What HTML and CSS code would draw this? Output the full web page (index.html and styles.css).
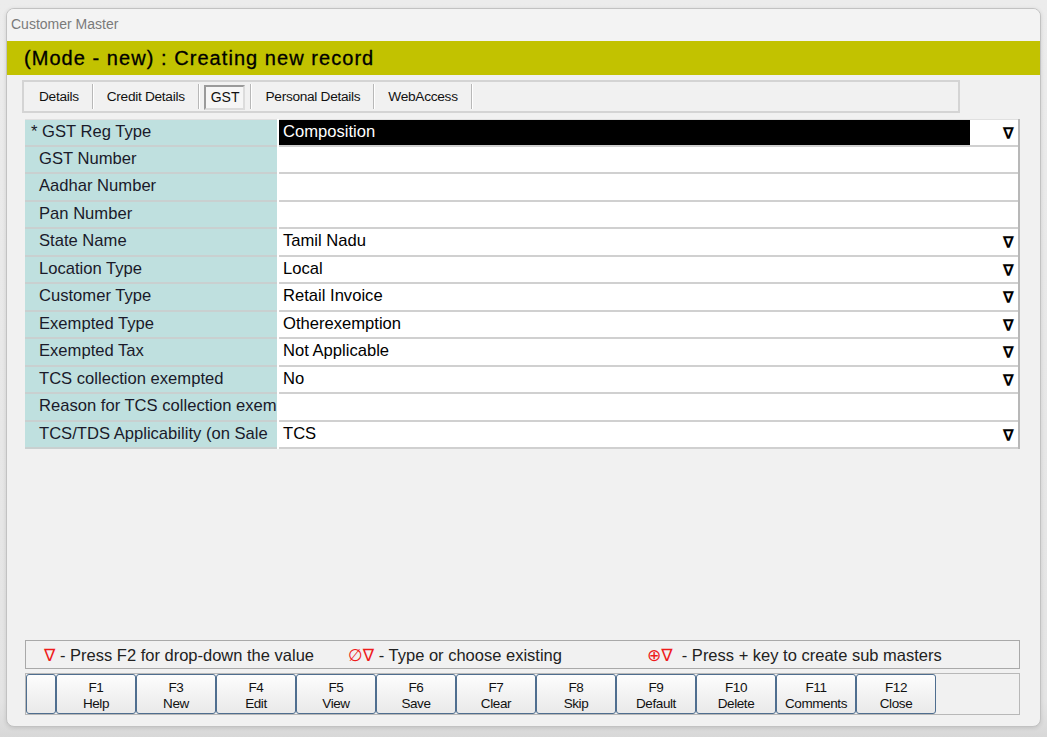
FILE: index.html
```html
<!DOCTYPE html>
<html>
<head>
<meta charset="utf-8">
<link rel="stylesheet" href="styles.css">
</head>
<body>
<div class="window">
  <div class="titlebar">Customer Master</div>
  <div class="modebar">(Mode - new) : Creating new record</div>
  <div class="tabs">
    <div class="tab first">Details</div>
    <div class="tab">Credit Details</div>
    <div class="tab active"><span class="tabbox">GST</span></div>
    <div class="tab">Personal Details</div>
    <div class="tab">WebAccess</div>
  </div>
  <div class="grid">
    <div class="row"><div class="label star">* GST Reg Type</div><div class="value"><span class="selected">Composition</span><span class="arrow">∇</span></div></div>
    <div class="row"><div class="label">GST Number</div><div class="value"></div></div>
    <div class="row"><div class="label">Aadhar Number</div><div class="value"></div></div>
    <div class="row"><div class="label">Pan Number</div><div class="value"></div></div>
    <div class="row"><div class="label">State Name</div><div class="value"><span class="text">Tamil Nadu</span><span class="arrow">∇</span></div></div>
    <div class="row"><div class="label">Location Type</div><div class="value"><span class="text">Local</span><span class="arrow">∇</span></div></div>
    <div class="row"><div class="label">Customer Type</div><div class="value"><span class="text">Retail Invoice</span><span class="arrow">∇</span></div></div>
    <div class="row"><div class="label">Exempted Type</div><div class="value"><span class="text">Otherexemption</span><span class="arrow">∇</span></div></div>
    <div class="row"><div class="label">Exempted Tax</div><div class="value"><span class="text">Not Applicable</span><span class="arrow">∇</span></div></div>
    <div class="row"><div class="label">TCS collection exempted</div><div class="value"><span class="text">No</span><span class="arrow">∇</span></div></div>
    <div class="row"><div class="label">Reason for TCS collection exem</div><div class="value"></div></div>
    <div class="row"><div class="label">TCS/TDS Applicability (on Sale</div><div class="value"><span class="text">TCS</span><span class="arrow">∇</span></div></div>
  </div>
  <div class="spacer"></div>
  <div class="helpbar">
    <span class="help h1"><span class="red">∇</span> - Press F2 for drop-down the value</span>
    <span class="help h2"><span class="red">∅∇</span> - Type or choose existing</span>
    <span class="help h3"><span class="red">⊕∇</span> &nbsp;- Press + key to create sub masters</span>
  </div>
  <div class="buttons">
    <div class="btn blank"></div>
    <div class="btn"><span>F1</span><span>Help</span></div>
    <div class="btn"><span>F3</span><span>New</span></div>
    <div class="btn"><span>F4</span><span>Edit</span></div>
    <div class="btn"><span>F5</span><span>View</span></div>
    <div class="btn"><span>F6</span><span>Save</span></div>
    <div class="btn"><span>F7</span><span>Clear</span></div>
    <div class="btn"><span>F8</span><span>Skip</span></div>
    <div class="btn"><span>F9</span><span>Default</span></div>
    <div class="btn"><span>F10</span><span>Delete</span></div>
    <div class="btn"><span>F11</span><span>Comments</span></div>
    <div class="btn"><span>F12</span><span>Close</span></div>
  </div>
</div>
</body>
</html>
```

FILE: styles.css
```css
html, body {
  margin: 0;
  padding: 0;
}
body {
  width: 1047px;
  height: 737px;
  background: linear-gradient(#ececec 0px, #e4e4e4 700px, #d8d8d8 737px);
  font-family: "Liberation Sans", Arial, sans-serif;
  overflow: hidden;
  padding-top: 8px;
  padding-left: 6px;
  box-sizing: border-box;
}
.window {
  width: 1035px;
  height: 719px;
  background: #f1f1f1;
  border: 1px solid #c2c2c2;
  border-radius: 8px;
  box-sizing: border-box;
  display: flex;
  flex-direction: column;
  overflow: hidden;
  box-shadow: 0 1px 4px rgba(0,0,0,0.12);
}
.titlebar {
  height: 32px;
  line-height: 31px;
  padding-left: 4px;
  font-size: 14px;
  color: #7a7a7a;
  background: #f3f3f3;
  flex: none;
}
.modebar {
  height: 34px;
  line-height: 35px;
  background: #c2c200;
  padding-left: 17px;
  font-size: 20px;
  color: #000;
  letter-spacing: 1.05px;
  -webkit-text-stroke: 0.3px #000;
  flex: none;
}
.tabs {
  margin: 5px 0 0 15px;
  width: 938px;
  height: 33px;
  border: 2px solid #d4d4d4;
  box-sizing: border-box;
  display: flex;
  align-items: center;
  font-size: 13.7px;
  color: #111;
  letter-spacing: -0.3px;
  flex: none;
}
.tab {
  height: 25px;
  line-height: 25px;
  padding: 0 13px 0 14px;
  border-right: 1px solid #b8b8b8;
  box-shadow: 1px 0 0 #ffffff;
}
.tab.first {
  padding-left: 15px;
}
.tab.active {
  padding: 0 5px 0 5px;
}
.tabbox {
  display: block;
  height: 21px;
  line-height: 21px;
  margin-top: 1px;
  padding: 0 4px 0 5px;
  border: 2px solid #9a9a9a;
  border-right-color: #dcdcdc;
  border-bottom-color: #dcdcdc;
  background: #f6f6f6;
  font-size: 14px;
  letter-spacing: 0;
}
.grid {
  margin: 6px 0 0 18px;
  width: 995px;
  border-right: 2px solid #b8b8b8;
  box-sizing: border-box;
  flex: none;
}
.row {
  display: flex;
  height: 27.5px;
  background: #fff;
}
.label {
  width: 252px;
  flex: none;
  background: #bfe0df;
  border-bottom: 2px solid #c9d0d0;
  box-sizing: border-box;
  padding-left: 14px;
  font-size: 16.6px;
  line-height: 24px;
  color: #1a1a2a;
  white-space: nowrap;
  overflow: hidden;
}
.label.star {
  padding-left: 6px;
}
.value {
  flex: 1;
  margin-left: 2px;
  border-bottom: 2px solid #d0d0d0;
  box-sizing: border-box;
  display: flex;
  align-items: stretch;
  font-size: 16.6px;
  line-height: 24px;
  color: #000;
}
.row:first-child .label,
.row:first-child .value {
  border-top: 1px solid #e0e0e0;
}
.text {
  flex: 1;
  padding-left: 4px;
}
.selected {
  width: 691px;
  flex: none;
  background: #000;
  color: #fff;
  padding-left: 4px;
  box-sizing: border-box;
}
.arrow {
  width: 24px;
  flex: none;
  text-align: right;
  padding-right: 4px;
  box-sizing: border-box;
  font-family: "DejaVu Sans", sans-serif;
  font-weight: bold;
  font-size: 16px;
  line-height: 28px;
  color: #000;
  margin-left: auto;
}
.spacer {
  flex: 1;
}
.helpbar {
  margin: 0 0 0 18px;
  width: 995px;
  height: 29px;
  border: 1px solid #a9a9a9;
  box-sizing: border-box;
  background: #f1f1f1;
  display: flex;
  align-items: center;
  font-size: 16.5px;
  color: #222;
  padding-left: 18px;
  flex: none;
}
.help {
  white-space: nowrap;
}
.h1 { width: 304px; }
.h2 { width: 299px; }
.red {
  color: #ee1c1c;
  font-family: "DejaVu Sans", sans-serif;
  font-size: 17px;
}
.buttons {
  margin: 4px 0 11px 18px;
  width: 995px;
  height: 42px;
  border: 1px solid #b8b8b8;
  box-sizing: border-box;
  display: flex;
  align-items: stretch;
  flex: none;
}
.btn {
  width: 80px;
  flex: none;
  border: 1px solid #4f6e8f;
  border-radius: 3px;
  background: linear-gradient(#fdfdfd, #e9e9e9);
  box-sizing: border-box;
  display: flex;
  flex-direction: column;
  align-items: center;
  justify-content: center;
  padding-top: 3px;
  font-size: 13.5px;
  line-height: 16px;
  color: #111;
  letter-spacing: -0.4px;
}
.btn.blank {
  width: 30px;
}
```
